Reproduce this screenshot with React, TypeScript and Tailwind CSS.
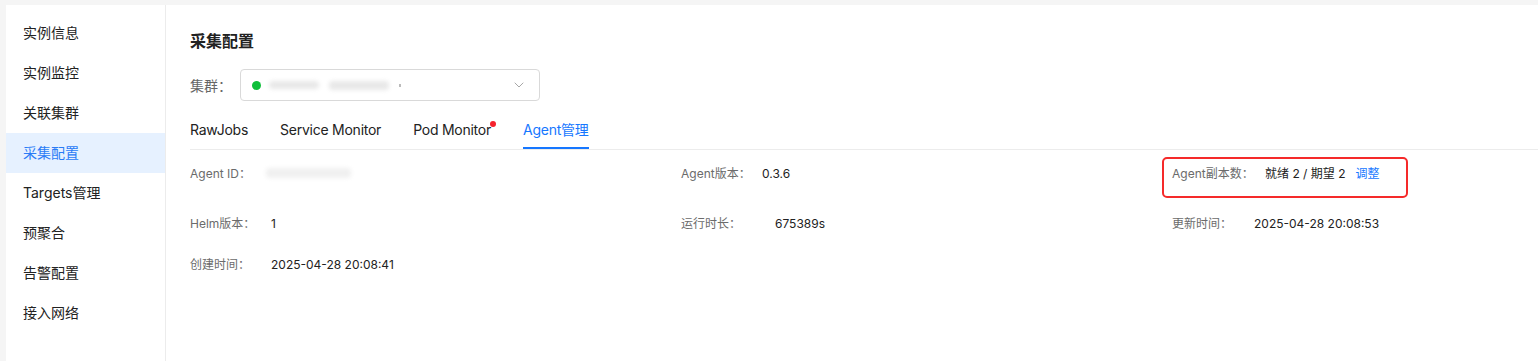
import { ChevronDown } from "lucide-react";

const menu = [
  "实例信息",
  "实例监控",
  "关联集群",
  "采集配置",
  "Targets管理",
  "预聚合",
  "告警配置",
  "接入网络",
];

const tabs = ["RawJobs", "Service Monitor", "Pod Monitor", "Agent管理"];

// Blurred stand-in for redacted values in the original screenshot.
const Redacted = ({ className }: { className: string }) => (
  <span className={`inline-block rounded-sm bg-[#e8e8e8] blur-[2px] ${className}`} />
);

const Item = ({
  label,
  labelWidth,
  children,
}: {
  label: string;
  labelWidth: string;
  children: React.ReactNode;
}) => (
  <div className="flex h-5 items-center text-[12px] leading-5">
    <span className={`shrink-0 text-[#6b6b6b] ${labelWidth}`}>{label}</span>
    <span className="text-[#222]">{children}</span>
  </div>
);

export default function App() {
  return (
    <div
      className="h-[361px] overflow-hidden bg-[#f5f5f5] pl-[6px] pt-[5px]"
      style={{ fontFamily: 'Inter, "Noto Sans CJK SC", sans-serif' }}
    >
      <div className="flex h-full bg-white">
        {/* side menu */}
        <div className="w-[160px] shrink-0 border-r border-[#ececec] pt-[8px]">
          {menu.map((m) => (
            <div
              key={m}
              className={
                m === "采集配置"
                  ? "flex h-10 items-center bg-[#e6f1ff] pb-[2px] pl-[17px] text-[14px] text-[#2a7cf6]"
                  : "flex h-10 items-center pb-[2px] pl-[17px] text-[14px] text-[#222]"
              }
            >
              {m}
            </div>
          ))}
        </div>

        {/* main */}
        <div className="min-w-0 flex-1 pl-[24px] pt-[24px]">
          <h1 className="h-6 text-[16px] font-semibold leading-6 text-[#222]">
            采集配置
          </h1>

          <div className="mt-4 flex items-center">
            <span className="w-[50px] text-[14px] text-[#666]">集群：</span>
            <div className="flex h-[32px] w-[300px] items-center rounded-[4px] border border-[#d9d9d9] pl-[11px] pr-[12px]">
              <span className="h-[9px] w-[9px] rounded-full bg-[#0fbf3a]" />
              <span className="ml-[8px] flex flex-1 items-center gap-[10px]">
                <Redacted className="h-[8px] w-[50px]" />
                <Redacted className="h-[9px] w-[60px]" />
                <span className="h-[3px] w-[2px] bg-[#bbb]" />
              </span>
              <ChevronDown size={16} strokeWidth={1.3} className="text-[#999]" />
            </div>
          </div>

          <div className="mt-[10px] flex gap-[32px] border-b border-[#ececec] text-[14px] tracking-[-0.25px]">
            {tabs.map((t) => (
              <div
                key={t}
                className={
                  t === "Agent管理"
                    ? "relative flex h-[38px] items-center border-b-2 border-[#1677ff] pt-[1px] text-[#1677ff]"
                    : "relative flex h-[38px] items-center border-b-2 border-transparent pt-[1px] text-[#222]"
                }
              >
                {t}
                {t === "Pod Monitor" ? (
                  <span className="absolute right-[-5px] top-[10px] h-[6px] w-[6px] rounded-full bg-[#f5222d]" />
                ) : null}
              </div>
            ))}
          </div>

          <div className="grid w-[1473px] grid-cols-[491px_491px_491px] pt-[14px]">
            <Item label="Agent ID：" labelWidth="w-[76px]">
              <Redacted className="mt-[4px] h-[10px] w-[85px] bg-[#f0f0f0]" />
            </Item>
            <Item label="Agent版本：" labelWidth="w-[81px]">
              0.3.6
            </Item>
            <div className="relative">
              <div className="pointer-events-none absolute left-[-10px] top-[-7px] h-[41px] w-[246px] rounded-[5px] border-2 border-[#f52a2a]" />
              <Item label="Agent副本数：" labelWidth="w-[93px]">
                就绪 2 / 期望 2
                <span className="ml-[10px] text-[#1677ff]">调整</span>
              </Item>
            </div>
          </div>

          <div className="mt-[30px] grid w-[1473px] grid-cols-[491px_491px_491px]">
            <Item label="Helm版本：" labelWidth="w-[81px]">
              1
            </Item>
            <Item label="运行时长：" labelWidth="w-[94px]">
              675389s
            </Item>
            <Item label="更新时间：" labelWidth="w-[82px]">
              2025-04-28 20:08:53
            </Item>
          </div>

          <div className="mt-[21px] grid w-[1473px] grid-cols-[491px_491px_491px]">
            <Item label="创建时间：" labelWidth="w-[81px]">
              2025-04-28 20:08:41
            </Item>
          </div>
        </div>
      </div>
    </div>
  );
}
